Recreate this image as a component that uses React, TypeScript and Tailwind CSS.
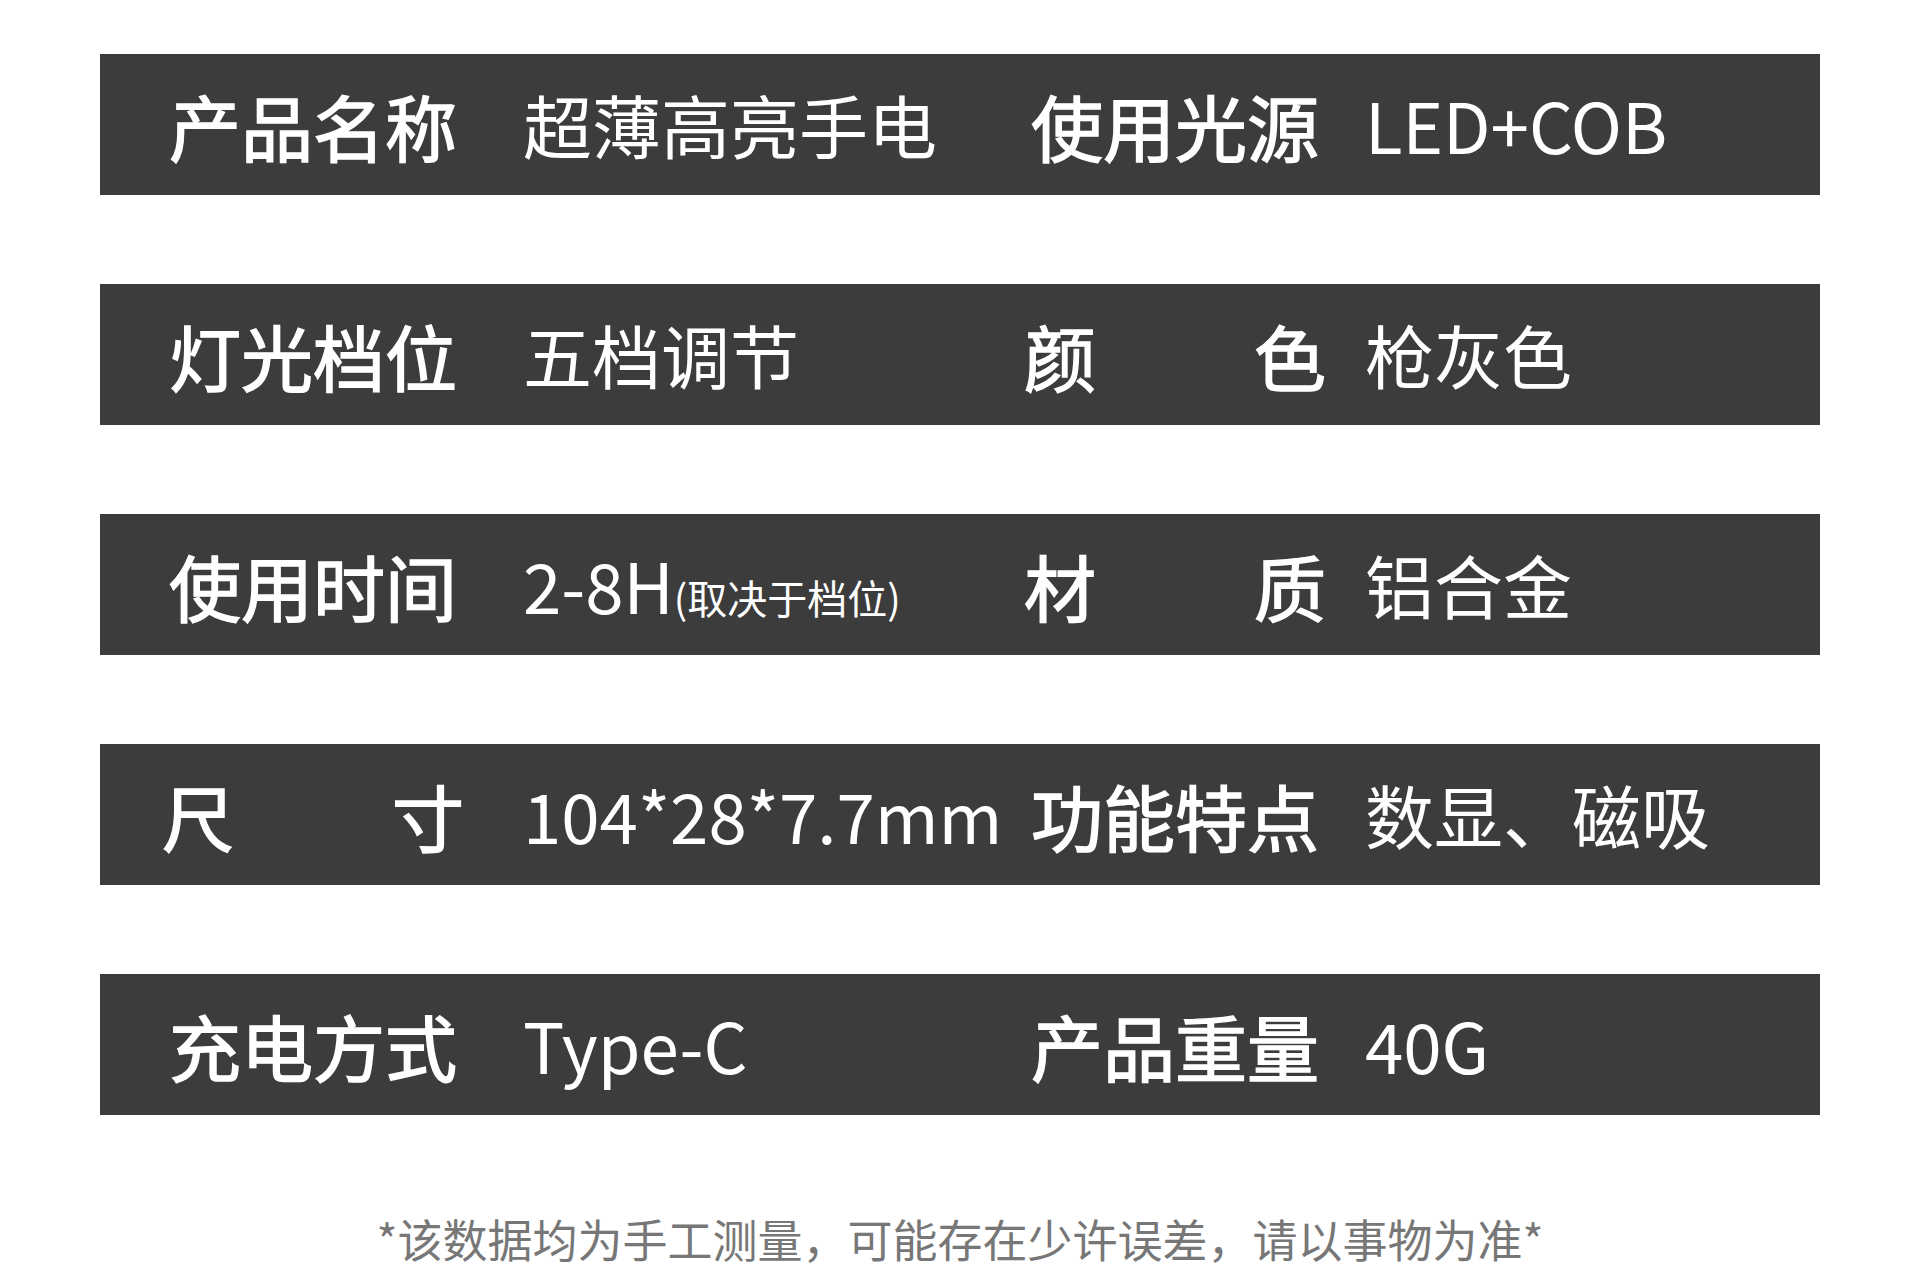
import React from 'react';

type Row = {
  label: string[];
  value: React.ReactNode;
  label2: string[];
  value2: string;
};

const rows: Row[] = [
  { label: ['产品名称'], value: '超薄高亮手电', label2: ['使用光源'], value2: 'LED+COB' },
  { label: ['灯光档位'], value: '五档调节', label2: ['颜', '色'], value2: '枪灰色' },
  {
    label: ['使用时间'],
    value: (
      <span className="flex items-baseline">
        <span>2-8H</span>
        <span className="text-[40px]">(取决于档位)</span>
      </span>
    ),
    label2: ['材', '质'],
    value2: '铝合金',
  },
  { label: ['尺', '寸'], value: '104*28*7.7mm', label2: ['功能特点'], value2: '数显、磁吸' },
  { label: ['充电方式'], value: 'Type-C', label2: ['产品重量'], value2: '40G' },
];

// two-character labels are spread over the width of a four-character one
const Label: React.FC<{ parts: string[] }> = ({ parts }) => (
  <div
    className={`flex justify-between text-[72px] [-webkit-text-stroke:1.5px_white] ${
      parts.length > 1 ? 'w-[302px] -ml-[7px] -mr-[5px]' : 'w-[290px]'
    }`}
  >
    {parts.map((p) => (
      <span key={p}>{p}</span>
    ))}
  </div>
);

const App: React.FC = () => {
  return (
    <div
      className="w-[1920px] h-[1288px] bg-white pt-[54px] flex flex-col items-center"
      style={{ fontFamily: '"Noto Sans CJK SC", "Noto Sans", sans-serif' }}
    >
      <div className="flex flex-col gap-[89px] w-[1720px]">
        {rows.map((r, i) => (
          <div key={i} className="h-[141px] bg-[#3c3c3c] flex items-center pl-[69px] text-white text-[69px] leading-none">
            <Label parts={r.label} />
            <div className="ml-[64px] w-[508px]">{r.value}</div>
            <Label parts={r.label2} />
            <div className="ml-[44px]">{r.value2}</div>
          </div>
        ))}
      </div>
      <p className="mt-[92px] text-[45px] leading-[64px] text-[#777777]">
        *该数据均为手工测量，可能存在少许误差，请以事物为准*
      </p>
    </div>
  );
};

export default App;
